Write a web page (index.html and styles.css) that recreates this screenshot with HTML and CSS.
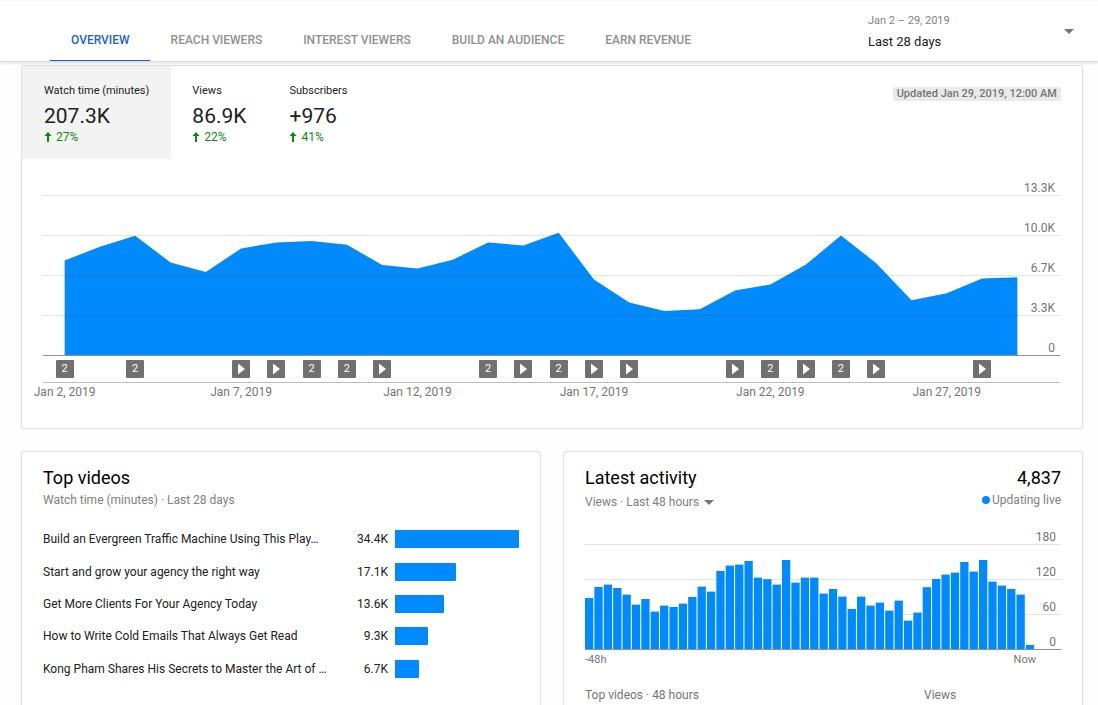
FILE: index.html
```html
<!DOCTYPE html>
<html lang="en">
<head>
<meta charset="utf-8">
<meta name="viewport" content="width=device-width, initial-scale=1">
<title>Channel analytics</title>
<link rel="stylesheet" href="styles.css">
</head>
<body>
<header class="topbar">
  <nav class="tabs" aria-label="Analytics sections">
    <a class="tab tab-active" href="#overview" aria-current="page">OVERVIEW</a>
    <a class="tab" href="#reach">REACH VIEWERS</a>
    <a class="tab" href="#interest">INTEREST VIEWERS</a>
    <a class="tab" href="#audience">BUILD AN AUDIENCE</a>
    <a class="tab" href="#revenue">EARN REVENUE</a>
  </nav>
  <div class="period">
    <div class="period-text">
      <label class="period-range" for="period">Jan 2 – 29, 2019</label>
      <select class="period-select" id="period"><option>Last 28 days</option></select>
    </div>
    <svg class="caret" viewBox="0 0 10 5" aria-hidden="true"><path d="M0 0h10L5 5z"/></svg>
  </div>
</header>

<main class="page">
  <section class="card summary" id="overview">
    <div class="summary-head">
      <div class="metrics">
        <button class="metric metric-active" type="button">
          <span class="metric-name">Watch time (minutes)</span>
          <span class="metric-value">207.3K</span>
          <span class="metric-change"><svg class="arrow" viewBox="0 0 8 10" aria-hidden="true"><path d="M4 0L7.6 4H5v6H3V4H.4z"/></svg>27%</span>
        </button>
        <button class="metric" type="button">
          <span class="metric-name">Views</span>
          <span class="metric-value">86.9K</span>
          <span class="metric-change"><svg class="arrow" viewBox="0 0 8 10" aria-hidden="true"><path d="M4 0L7.6 4H5v6H3V4H.4z"/></svg>22%</span>
        </button>
        <button class="metric" type="button">
          <span class="metric-name">Subscribers</span>
          <span class="metric-value">+976</span>
          <span class="metric-change"><svg class="arrow" viewBox="0 0 8 10" aria-hidden="true"><path d="M4 0L7.6 4H5v6H3V4H.4z"/></svg>41%</span>
        </button>
      </div>
      <span class="updated">Updated Jan 29, 2019, 12:00 AM</span>
    </div>

    <div class="chart">
      <div class="plot">
        <svg class="area" id="area" preserveAspectRatio="none" role="img" aria-label="Watch time by day"></svg>
        <div class="grid">
          <span class="grid-line">13.3K</span>
          <span class="grid-line">10.0K</span>
          <span class="grid-line">6.7K</span>
          <span class="grid-line">3.3K</span>
          <span class="grid-line grid-base">0</span>
        </div>
      </div>
      <div class="track"><div class="days" id="uploads"></div></div>
      <div class="days dates" id="dates"></div>
    </div>
  </section>

  <div class="columns">
    <section class="card panel">
      <h2 class="title">Top videos</h2>
      <p class="subtitle">Watch time (minutes) · Last 28 days</p>
      <table class="videos">
        <tbody>
          <tr><td class="name">Build an Evergreen Traffic Machine Using This Play…</td><td class="count">34.4K</td><td class="meter"><div class="fill" style="width:100%"></div></td></tr>
          <tr><td class="name">Start and grow your agency the right way</td><td class="count">17.1K</td><td class="meter"><div class="fill" style="width:49%"></div></td></tr>
          <tr><td class="name">Get More Clients For Your Agency Today</td><td class="count">13.6K</td><td class="meter"><div class="fill" style="width:39.5%"></div></td></tr>
          <tr><td class="name">How to Write Cold Emails That Always Get Read</td><td class="count">9.3K</td><td class="meter"><div class="fill" style="width:26.6%"></div></td></tr>
          <tr><td class="name">Kong Pham Shares His Secrets to Master the Art of …</td><td class="count">6.7K</td><td class="meter"><div class="fill" style="width:19.4%"></div></td></tr>
        </tbody>
      </table>
    </section>

    <section class="card panel">
      <div class="live-head">
        <div>
          <h2 class="title">Latest activity</h2>
          <div class="range">
            <select class="range-select" aria-label="Activity range"><option>Views · Last 48 hours</option></select>
            <svg class="caret" viewBox="0 0 10 5" aria-hidden="true"><path d="M0 0h10L5 5z"/></svg>
          </div>
        </div>
        <div class="live">
          <div class="title">4,837</div>
          <div class="subtitle live-status"><span class="dot"></span>Updating live</div>
        </div>
      </div>
      <div class="plot plot-small">
        <svg class="bars" id="bars" preserveAspectRatio="none" role="img" aria-label="Views by hour"></svg>
        <div class="grid">
          <span class="grid-line">180</span>
          <span class="grid-line">120</span>
          <span class="grid-line">60</span>
          <span class="grid-line grid-base">0</span>
        </div>
      </div>
      <div class="hours"><span>-48h</span><span>Now</span></div>
      <table class="recent">
        <thead><tr><th>Top videos · 48 hours</th><th class="recent-views">Views</th></tr></thead>
      </table>
    </section>
  </div>
</main>
<script src="script.js"></script>
</body>
</html>
```
FILE: styles.css
```css
* { box-sizing: border-box; }

body {
  margin: 0;
  height: 100vh;
  overflow: hidden;
  display: flex;
  flex-direction: column;
  background: #fefefe;
  color: #212121;
  font: 12px/16px Roboto, "Liberation Sans", sans-serif;
}

select, button {
  appearance: none;
  margin: 0;
  padding: 0;
  border: 0;
  background: none;
  color: inherit;
  font: inherit;
}

.topbar {
  z-index: 1;
  flex: none;
  display: flex;
  justify-content: space-between;
  height: 62px;
  padding: 0 24px 0 50px;
  background: #fff;
  border-top: 1px solid #f8f8f8;
  border-bottom: 1px solid #dcdcdc;
  box-shadow: 0 1px 3px rgba(0, 0, 0, .14);
}

.tabs { display: flex; align-items: flex-end; }
.tab {
  height: 42px;
  padding: 13px 20px 0 21px;
  color: #909090;
  font-weight: 500;
  text-decoration: none;
  white-space: nowrap;
}
.tab-active { border-bottom: 1px solid #1a5fdc; color: #1a5fdc; }

.period {
  display: flex;
  align-items: center;
  justify-content: space-between;
  width: 206px;
}
.period-text { display: flex; flex-direction: column; align-items: flex-start; gap: 4px; padding-top: 2px; }
.period-range { color: #828282; font-size: 11px; }
.period-select { height: 18px; font-size: 13px; line-height: 18px; }
.caret { display: block; width: 10px; height: 5px; fill: #757575; pointer-events: none; }

.page { flex: 1; min-height: 0; padding: 3px 15px 0 21px; }
.card { background: #fff; border: 1px solid #dfdfdf; border-radius: 2px; }

.summary { height: 364px; }
.summary-head { display: flex; justify-content: space-between; align-items: flex-start; padding-right: 21px; }
.metrics { display: flex; }
.metric {
  display: flex;
  flex-direction: column;
  align-items: flex-start;
  height: 93px;
  padding: 17px 22px 0 21px;
  text-align: left;
}
.metric-active { padding-left: 22px; background: #f3f3f3; }
.metric-name { font-size: 11px; }
.metric-value { margin-top: 3px; font-size: 21px; line-height: 28px; }
.metric-change { display: flex; align-items: center; gap: 4px; color: #0d8a0d; line-height: 14px; }
.arrow { width: 8px; height: 10px; fill: #0d8a0d; }
.updated {
  margin-top: 21px;
  padding: 0 4px;
  border-radius: 2px;
  background: #eaeaea;
  color: #757575;
  font-size: 11px;
  font-weight: 500;
  line-height: 14px;
}

.chart { margin: 36px 22px 0 21px; color: #757575; }
.plot { display: grid; height: 161px; }
.area, .bars, .grid { grid-area: 1 / 1; }
.area { width: calc(100% - 29px); height: 161px; margin-left: 4px; }
.grid { display: flex; flex-direction: column; justify-content: space-between; }
.grid-line {
  height: 16px;
  margin-top: -15px;
  padding-right: 5px;
  border-bottom: 1px solid rgba(0, 0, 0, .11);
  line-height: 17px;
  text-align: right;
}
.grid-base { border-color: #8f8f8f; }

.track { height: 27px; padding-top: 4px; border-bottom: 1px solid #bdbdbd; }
.days { display: grid; grid-template-columns: repeat(28, minmax(0, 1fr)); margin: 0 25px 0 4px; }
.upload {
  justify-self: center;
  width: 18px;
  height: 18px;
  border-radius: 1px;
  background: #707070;
  color: #fff;
  font-size: 11px;
  line-height: 18px;
  text-align: center;
}
.play { display: block; width: 18px; height: 18px; fill: #fff; }
.dates { padding-top: 1px; }
.date { justify-self: center; grid-row: 1; white-space: nowrap; }

.columns { display: grid; grid-template-columns: 1fr 1fr; gap: 22px; margin-top: 22px; }
.panel { min-width: 0; min-height: 280px; padding: 14px 21px 0; }
.title { margin: 0; color: #000; font-size: 18px; font-weight: 400; line-height: 24px; }
.subtitle { margin: 2px 0 0; color: #808080; }

.videos { width: 100%; height: 162px; margin-top: 15px; border-collapse: collapse; table-layout: fixed; }
.videos td { padding: 0; }
.name { white-space: nowrap; }
.videos .count { width: 56px; padding-right: 7px; text-align: right; }
.meter { width: 124px; }
.fill { height: 18px; border-radius: 0 1px 1px 0; background: #008afc; }

.live-head { display: flex; justify-content: space-between; }
.live { text-align: right; }
.range { display: flex; align-items: center; gap: 4px; margin-top: 4px; color: #808080; }
.range-select { height: 16px; line-height: 16px; }
.live-status { display: flex; align-items: center; gap: 2px; }
.dot { width: 8px; height: 8px; border-radius: 4px; background: #008afc; }

.plot-small { height: 106px; margin-top: 34px; color: #757575; }
.bars { z-index: 1; width: calc(100% - 26px); height: 105px; }
.hours { display: flex; justify-content: space-between; margin: 2px 25px 0 0; color: #757575; font-size: 11px; }
.recent { width: 100%; margin-top: 19px; border-collapse: collapse; table-layout: fixed; color: #757575; }
.recent th { padding: 0; font-weight: 400; text-align: left; }
.recent .recent-views { width: 137px; }
```
FILE: script.js
```js
const SVG = "http://www.w3.org/2000/svg";
const BLUE = "#008afc";

// Distance of each day's value from the top of the plot, which is 160 units high.
const days = [65, 51.5, 40.5, 67, 76.5, 53.2, 47.2, 45.6, 49.5, 69.5, 73, 64.3, 47.2, 50.2,
  37.4, 84, 106.8, 115.2, 113.6, 94.8, 89, 69.4, 40.2, 67.8, 104.6, 97.6, 83, 81.8];
const area = document.getElementById("area");
area.setAttribute("viewBox", "0 0 28 160");
const shape = document.createElementNS(SVG, "polygon");
shape.setAttribute("points",
  "0.5,160 " + days.map((y, i) => `${i + 0.5},${y}`).join(" ") + " 27.5,160");
shape.setAttribute("fill", BLUE);
area.append(shape);

const uploads = { 0: 2, 2: 2, 5: 1, 6: 1, 7: 2, 8: 2, 9: 1, 12: 2, 13: 1, 14: 2, 15: 1, 16: 1,
  19: 1, 20: 2, 21: 1, 22: 2, 23: 1, 26: 1 };
for (const [day, count] of Object.entries(uploads)) {
  const mark = document.createElement("button");
  mark.type = "button";
  mark.className = "upload";
  mark.style.gridColumn = Number(day) + 1;
  if (count > 1) {
    mark.textContent = count;
  } else {
    mark.setAttribute("aria-label", "Video published");
    mark.innerHTML = '<svg class="play" viewBox="0 0 18 18"><path d="M6 3.5v11l7-5.5z"/></svg>';
  }
  document.getElementById("uploads").append(mark);
}

for (const day of [2, 7, 12, 17, 22, 27]) {
  const date = document.createElement("span");
  date.className = "date";
  date.style.gridColumn = day - 1;
  date.textContent = `Jan ${day}, 2019`;
  document.getElementById("dates").append(date);
}

const hours = [51, 62, 64.4, 61, 54.4, 44.4, 50, 37.4, 43.4, 42, 45.4, 52, 62.4, 57.4, 78, 83.4,
  84.4, 88, 71.4, 69.8, 64.4, 89, 66.4, 71.4, 71.4, 55.4, 60, 52.4, 40, 52.4, 43.4, 46.4, 38.4,
  48.4, 28.4, 36.4, 61.8, 70, 74.4, 76.4, 87, 77.4, 89, 67.4, 63.4, 60, 54.4, 4];
const bars = document.getElementById("bars");
bars.setAttribute("viewBox", "0 0 450 105");
hours.forEach((h, i) => {
  const bar = document.createElementNS(SVG, "rect");
  bar.setAttribute("x", i * 9.38);
  bar.setAttribute("y", 105 - h);
  bar.setAttribute("width", 8.3);
  bar.setAttribute("height", h);
  bar.setAttribute("fill", BLUE);
  bars.append(bar);
});
```
